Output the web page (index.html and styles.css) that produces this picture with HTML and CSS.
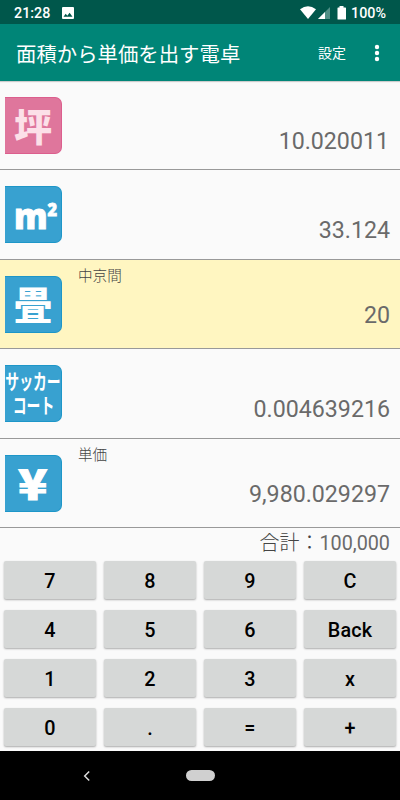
FILE: index.html
```html
<!DOCTYPE html>
<html lang="ja">

<head>
    <meta charset="UTF-8">
    <meta name="viewport" content="width=device-width, initial-scale=1.0">
    <title>面積から単価を出す電卓</title>
    <link rel="stylesheet" href="styles.css">
</head>

<body>
    <div class="status">
        <span class="time">21:28</span>
        <svg class="photo" width="12" height="12" viewBox="0 0 12 12">
            <path fill="#fff" fill-rule="evenodd" d="M1 0h10a1 1 0 0 1 1 1v10a1 1 0 0 1-1 1H1a1 1 0 0 1-1-1V1a1 1 0 0 1 1-1zM1.5 9.8h9L7.6 5.8 5.3 8.7 3.7 6.8z"/>
        </svg>
        <svg class="signals" width="48" height="14" viewBox="0 0 48 14">
            <path fill="#fff" d="M0 3.2Q8-2.8 16 3.2L8 13z"/>
            <path fill="#4f8f86" d="M30 1v12H18z"/>
            <path fill="#fff" d="M25 6v7h-7z"/>
            <path fill="#fff" d="M39.500 0h4v1.500h1.900q.6 0 .6.6v10.800q0 .6-.6.6h-7.300q-.6 0-.6-.6V2.100q0-.6.6-.6h1.400z"/>
        </svg>
        <span class="percent">100%</span>
    </div>
    <header>
        <h1>面積から単価を出す電卓</h1>
        <span class="setting">設定</span>
        <svg class="more" width="6" height="18" viewBox="0 0 6 18">
            <circle cx="3" cy="3" r="2.200"/>
            <circle cx="3" cy="9" r="2.200"/>
            <circle cx="3" cy="15" r="2.200"/>
        </svg>
    </header>
    <main>
        <ul class="list">
            <li>
                <div class="unit pink"><span>坪</span></div>
                <div class="field"><p class="value first">10.020011</p></div>
            </li>
            <li>
                <div class="unit metre"><span>m<sup>2</sup></span></div>
                <div class="field"><p class="value">33.124</p></div>
            </li>
            <li class="active">
                <div class="unit"><span>畳</span></div>
                <div class="field"><p class="label">中京間</p><p class="value">20</p></div>
            </li>
            <li>
                <div class="unit soccer"><span>サッカー</span><span>コート</span></div>
                <div class="field"><p class="value">0.004639216</p></div>
            </li>
            <li>
                <div class="unit yen"><span>¥</span></div>
                <div class="field"><p class="label">単価</p><p class="value">9,980.029297</p></div>
            </li>
        </ul>
        <p class="total">合計：<span>100,000</span></p>
        <div class="keys">
            <button>7</button>
            <button>8</button>
            <button>9</button>
            <button>C</button>
            <button>4</button>
            <button>5</button>
            <button>6</button>
            <button>Back</button>
            <button>1</button>
            <button>2</button>
            <button>3</button>
            <button>x</button>
            <button>0</button>
            <button>.</button>
            <button>=</button>
            <button>+</button>
        </div>
    </main>
    <nav>
        <svg width="8" height="12" viewBox="0 0 8 12">
            <path fill="none" stroke="#ddd" stroke-width="1.500" d="M6.200 1.500L1.700 6l4.500 4.500"/>
        </svg>
        <span class="home"></span>
    </nav>
</body>

</html>
```

FILE: styles.css
```css
* {
    margin: 0;
    padding: 0;
    box-sizing: border-box
}

body {
    display: flex;
    flex-direction: column;
    width: 400px;
    height: 800px;
    overflow: hidden;
    font-family: Roboto, "Noto Sans CJK JP", sans-serif;
    background: #fafafa
}

.status {
    display: flex;
    align-items: center;
    height: 24px;
    padding: 2px 14px 0 14px;
    font-size: 14.300px;
    font-weight: 500;
    color: #fff;
    background: #00574b
}

.photo {
    margin-left: 12px
}

.signals {
    margin-left: auto
}

.percent {
    margin-left: 3px
}

header {
    display: flex;
    align-items: center;
    height: 57px;
    padding: 0 20px 0 16px;
    color: #fff;
    background: #008577;
    box-shadow: 0 1px 1px #ccc
}

h1 {
    font-size: 20.4px;
    font-weight: 400
}

.setting {
    margin-left: auto;
    padding-bottom: 1px;
    font-size: 14px
}

.more {
    margin-left: 28px;
    fill: #fff
}

.list {
    display: grid;
    grid-template-rows: repeat(5, 1fr);
    height: 447px;
    list-style: none
}

.list li {
    display: flex;
    padding: 16px 10px 0 5px;
    border-bottom: 1px solid #999
}

.list .active {
    background: #fff6c1
}

.unit {
    display: flex;
    flex-direction: column;
    align-items: center;
    justify-content: center;
    width: 57px;
    height: 57px;
    padding-bottom: 2px;
    font-family: "Noto Sans CJK JP", sans-serif;
    font-size: 38px;
    font-weight: 900;
    line-height: 1;
    color: #fff;
    background: #38a1d0;
    border: 1px solid #1d96c8;
    border-left: 0;
    border-radius: 0 7px 7px 0
}

.pink {
    color: #fce0e8;
    background: #df769c;
    border-color: #dc5e8d
}

.metre {
    padding: 1px 0 0 4px;
    font-family: "Open Sans", sans-serif;
    font-size: 35px;
    font-weight: 800
}

.metre sup {
    font-size: 17px;
    line-height: 0
}

.metre span {
    transform: scaleX(.96);
    -webkit-text-stroke: .8px #fff
}

.soccer {
    padding: 0;
    font-family: Roboto, "Noto Sans CJK JP", sans-serif;
    font-size: 21px;
    font-weight: 700;
    line-height: 24px
}

.soccer span {
    white-space: nowrap;
    transform: scaleX(.66)
}

.yen {
    font-size: 42px
}

.yen span {
    transform: scaleX(1.150);
    -webkit-text-stroke: 1px #fff
}

.field {
    display: flex;
    flex: 1;
    flex-direction: column;
    justify-content: flex-end;
    margin-top: -16px;
    padding: 0 0 15px 16px;
    color: #6a6a6a
}

.value {
    font-size: 23.200px;
    line-height: 28px;
    text-align: right
}

.first {
    position: relative;
    top: 1px;
    padding-right: 1px
}

.label {
    font-size: 14.600px;
    font-weight: 300;
    line-height: 20px;
    color: #444
}

.label + .value {
    margin: 15px 0 4px
}

.total {
    height: 29px;
    padding-right: 10px;
    font-size: 20px;
    font-weight: 300;
    line-height: 31px;
    text-align: right;
    color: #444
}

.total span {
    font-size: 19.800px;
    font-weight: 400;
    color: #6a6a6a
}

.keys {
    display: grid;
    grid-template-columns: repeat(4, 1fr);
    grid-auto-rows: 38px;
    gap: 11px 8px;
    padding: 4px 4px 0
}

button {
    padding-top: 2px;
    font-family: Roboto, sans-serif;
    font-size: 19.800px;
    font-weight: 500;
    letter-spacing: .2px;
    color: #000;
    background: #d6d8d7;
    border: 0;
    border-radius: 2px;
    box-shadow: 0 1px 2px #aaa
}

nav {
    display: flex;
    align-items: center;
    height: 49px;
    margin-top: auto;
    padding-left: 83px;
    background: #000
}

.home {
    width: 29px;
    height: 11px;
    margin-left: 95px;
    border-radius: 6px;
    background: #d0d0d0
}
```
